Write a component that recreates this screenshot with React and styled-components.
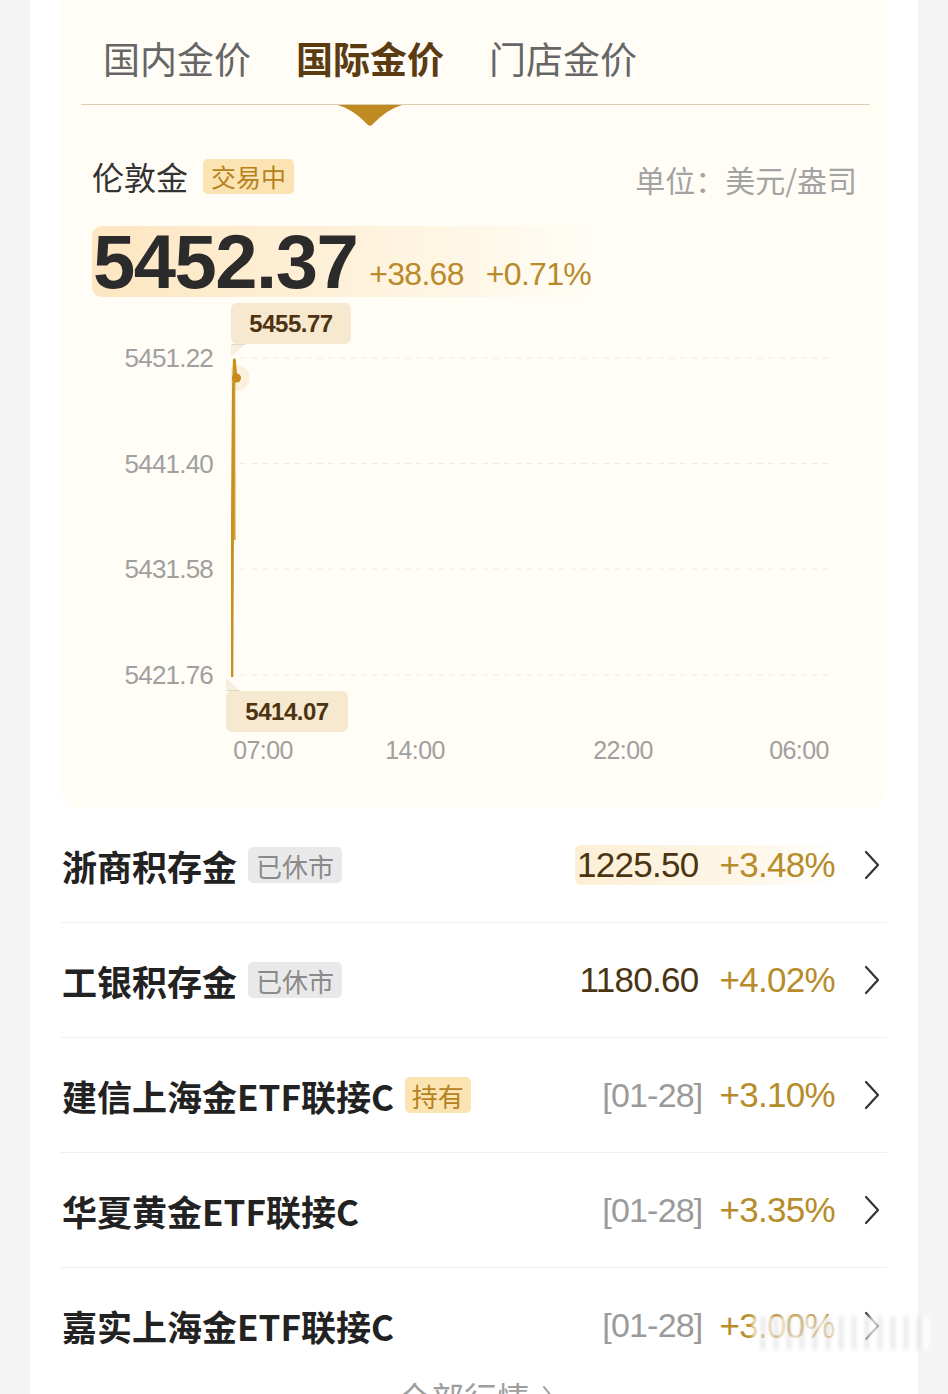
import React from 'react';
import styled, { createGlobalStyle } from 'styled-components';

const CJK = '"Noto Sans CJK SC", "Noto Sans", sans-serif';
const NUM = '"Liberation Sans", Arial, "Noto Sans CJK SC", sans-serif';

const Global = createGlobalStyle`
  html, body { margin: 0; padding: 0; height: 1394px; overflow: hidden; background: #f4f4f4; }
  body { font-family: ${CJK}; }
  * { box-sizing: border-box; }
`;

const Card = styled.div`
  position: relative;
  margin: 0 30px;
  min-height: 1394px;
  background: #fff;
  padding: 0 31px;
`;

const Panel = styled.section`
  background: #fffdf5;
  border-radius: 0 0 18px 18px;
  padding: 0 0 43px;
`;

const TabBar = styled.div`
  display: flex;
  gap: 45px;
  margin: 0 17px 0 20px;
  padding: 36px 0 24px 22px;
  border-bottom: 1px solid #dccfae;
`;

const Tab = styled.div`
  position: relative;
  font-size: 37px;
  line-height: 44px;
  font-weight: ${p => (p.$active ? 700 : 400)};
  color: ${p => (p.$active ? '#5a3b12' : '#666')};
`;

const Pointer = styled.svg`
  position: absolute;
  top: calc(100% + 25px);
  left: 50%;
  transform: translateX(-50%);
`;

const Header = styled.div`
  display: flex;
  align-items: center;
  justify-content: space-between;
  height: 40px;
  margin: 51px 30px 0 31px;
`;

const Title = styled.div`
  display: flex;
  align-items: center;
  gap: 15px;
  font-size: 32px;
  line-height: 40px;
  color: #333;
`;

const Tag = styled.span`
  display: inline-flex;
  align-items: center;
  height: ${p => p.$h || 36}px;
  padding: 0 ${p => p.$px || 7}px;
  border-radius: 5px;
  font-size: ${p => p.$fs || 26}px;
  font-weight: 400;
  background: ${p => (p.$tone === 'gray' ? '#e9e9e9' : '#fce3b2')};
  color: ${p => (p.$tone === 'gray' ? '#8a8a8a' : '#b5821f')};
`;

const Unit = styled.div`
  font-size: 30px;
  color: #a3a3a3;
  margin-top: 6px;
`;

const PriceBox = styled.div`
  display: flex;
  align-items: baseline;
  width: 500px;
  height: 71px;
  margin: 30px 0 0 31px;
  padding-left: 1px;
  border-radius: 10px;
  background: linear-gradient(90deg, #fde6c1 0%, #fef2dc 55%, rgba(255, 253, 245, 0) 100%);
`;

const Price = styled.span`
  font-family: ${NUM};
  font-size: 76px;
  letter-spacing: -1.5px;
  line-height: 71px;
  font-weight: 700;
  color: #2b2b2b;
`;

const Change = styled.span`
  font-family: ${NUM};
  font-size: 32px;
  letter-spacing: -0.7px;
  color: #b88a2a;
  margin-left: ${p => p.$ml}px;
  position: relative;
  top: -3px;
`;

const Chart = styled.div`
  display: flex;
  gap: 18px;
  margin-top: 46px;
`;

const YAxis = styled.div`
  width: 152px;
  height: 347px;
  display: flex;
  flex-direction: column;
  justify-content: space-between;
  align-items: flex-end;
`;

const AxisLabel = styled.span`
  font-family: ${NUM};
  font-size: 26px;
  letter-spacing: -0.8px;
  line-height: 30px;
  color: #a0a0a0;
`;

const Plot = styled.div`
  position: relative;
  width: 599px;
  height: 347px;
`;

const Bubble = styled.div`
  position: absolute;
  left: ${p => p.$left}px;
  top: ${p => p.$top}px;
  width: ${p => p.$w}px;
  height: 41px;
  border-radius: 6px;
  background: #f6e9cf;
  color: #4d3312;
  font-family: ${NUM};
  font-weight: 700;
  font-size: 24px;
  letter-spacing: -0.5px;
  display: flex;
  align-items: center;
  justify-content: center;
`;

const Tail = styled.svg`
  position: absolute;
  left: ${p => p.$left}px;
  top: ${p => p.$top}px;
`;

const XAxis = styled.div`
  display: flex;
  margin-top: 45px;
  padding-left: 170px;
  height: 30px;
`;

const XLabel = styled(AxisLabel)`
  width: 80px;
  text-align: center;
  margin-left: ${p => p.$ml}px;
  font-size: 25px;
  letter-spacing: -0.6px;
`;

const List = styled.div`
  display: flex;
  flex-direction: column;
`;

const Row = styled.div`
  display: flex;
  align-items: center;
  height: 115px;
  padding: 0 7px 0 1px;
  border-bottom: ${p => (p.$last ? 'none' : '1px solid #efefef')};
`;

const Name = styled.div`
  display: flex;
  align-items: center;
  gap: 11px;
  font-size: 35px;
  font-weight: 700;
  color: #222;
`;

const Quote = styled.div`
  margin-left: auto;
  display: flex;
  align-items: center;
  height: 40px;
  padding: 0 2px;
  border-radius: 6px;
  background: ${p =>
    p.$hl ? 'linear-gradient(90deg, #fdefd6 0%, #fef6e8 65%, rgba(255,255,255,0) 100%)' : 'transparent'};
`;

const Value = styled.span`
  font-family: ${NUM};
  font-size: ${p => (p.$date ? 34 : 35)}px;
  letter-spacing: ${p => (p.$date ? -0.8 : -0.7)}px;
  color: ${p => (p.$date ? '#9a9a9a' : '#4a3411')};
`;

const Pct = styled.span`
  font-family: ${NUM};
  font-size: 35px;
  letter-spacing: -0.7px;
  color: #b78c2a;
  margin-left: ${p => p.$ml}px;
`;

const Chevron = styled.svg`
  margin-left: 27px;
  flex: none;
`;

const Footer = styled.div`
  display: flex;
  justify-content: center;
  align-items: center;
  gap: 12px;
  font-size: 33px;
  line-height: 40px;
  color: #9e9e9e;
  margin-top: -6px;
  padding-left: 4px;
`;

const Watermark = styled.div`
  position: absolute;
  right: -12px;
  top: 1316px;
  width: 178px;
  height: 34px;
  filter: blur(2px);
  background: repeating-linear-gradient(
    90deg,
    rgba(255, 255, 255, 0.9) 0px,
    rgba(255, 255, 255, 0.9) 9px,
    rgba(120, 120, 120, 0.45) 11px,
    rgba(255, 255, 255, 0.9) 13px
  );
  opacity: 0.8;
`;

const tabs = [
  { label: '国内金价' },
  { label: '国际金价', active: true },
  { label: '门店金价' },
];

const yLabels = ['5451.22', '5441.40', '5431.58', '5421.76'];
const xCenters = [
  { t: '07:00', c: 32 },
  { t: '14:00', c: 184 },
  { t: '22:00', c: 392 },
  { t: '06:00', c: 568 },
];

const rows = [
  { name: '浙商积存金', tag: { text: '已休市', tone: 'gray' }, value: '1225.50', pct: '+3.48%', hl: true },
  { name: '工银积存金', tag: { text: '已休市', tone: 'gray' }, value: '1180.60', pct: '+4.02%' },
  { name: '建信上海金ETF联接C', tag: { text: '持有', tone: 'gold' }, value: '[01-28]', date: true, pct: '+3.10%' },
  { name: '华夏黄金ETF联接C', value: '[01-28]', date: true, pct: '+3.35%' },
  { name: '嘉实上海金ETF联接C', value: '[01-28]', date: true, pct: '+3.00%' },
];

function PriceChart() {
  const grid = [15, 120.5, 226, 332];
  return (
    <Plot>
      <svg width="599" height="347" viewBox="0 0 599 347" style={{ position: 'absolute', left: 0, top: 0 }}>
        {grid.map(y => (
          <line key={y} x1="9" x2="599" y1={y} y2={y} stroke="#ececec" strokeWidth="1" strokeDasharray="6 5" />
        ))}
        <circle cx="5.5" cy="35" r="13" fill="rgba(205,160,70,0.13)" />
        <path d="M0.8 334 L1.6 160 L2.4 50 L3.4 17 L4.2 28 L5 34" fill="none" stroke="#c8911f" strokeWidth="3" strokeLinejoin="round" />
        <path d="M3.6 34 L3.8 197" fill="none" stroke="#d29a2a" strokeWidth="1.4" />
        <circle cx="5.5" cy="35" r="4.5" fill="#c8891a" />
      </svg>
      <Bubble $left={0} $top={-40} $w={120}>5455.77</Bubble>
      <Tail $left={0} $top={1} width="14" height="13" viewBox="0 0 14 13">
        <path d="M0 0 H14 L0 13 Z" fill="#f6efdf" />
        <line x1="0" x2="14" y1="0.5" y2="0.5" stroke="#e2d8c4" strokeWidth="1" />
      </Tail>
      <Bubble $left={-5} $top={348} $w={122}>5414.07</Bubble>
      <Tail $left={-5} $top={335} width="14" height="13" viewBox="0 0 14 13">
        <path d="M0 0 L14 13 H0 Z" fill="#f6efdf" />
        <line x1="0" x2="14" y1="12.5" y2="12.5" stroke="#e2d8c4" strokeWidth="1" />
      </Tail>
    </Plot>
  );
}

export default function App() {
  let prev = 0;
  const xs = xCenters.map(({ t, c }) => {
    const ml = c - 40 - prev;
    prev = c + 40;
    return { t, ml };
  });

  return (
    <>
      <Global />
      <Card>
        <Panel>
          <TabBar>
            {tabs.map(t => (
              <Tab key={t.label} $active={t.active}>
                {t.label}
                {t.active && (
                  <Pointer width="64" height="22" viewBox="0 0 64 22">
                    <path d="M0 0 H64 Q48 5 35.5 18.5 Q32 23 28.5 18.5 Q16 5 0 0 Z" fill="#c08a22" />
                  </Pointer>
                )}
              </Tab>
            ))}
          </TabBar>

          <Header>
            <Title>
              伦敦金
              <Tag $tone="gold" $h={35} $px={8} $fs={25}>交易中</Tag>
            </Title>
            <Unit>单位：美元/盎司</Unit>
          </Header>

          <PriceBox>
            <Price>5452.37</Price>
            <Change $ml={12}>+38.68</Change>
            <Change $ml={22}>+0.71%</Change>
          </PriceBox>

          <Chart>
            <YAxis>
              {yLabels.map(l => (
                <AxisLabel key={l}>{l}</AxisLabel>
              ))}
            </YAxis>
            <PriceChart />
          </Chart>

          <XAxis>
            {xs.map(x => (
              <XLabel key={x.t} $ml={x.ml}>{x.t}</XLabel>
            ))}
          </XAxis>
        </Panel>

        <List>
          {rows.map((r, i) => (
            <Row key={r.name} $last={i === rows.length - 1}>
              <Name>
                {r.name}
                {r.tag && (
                  <Tag $tone={r.tag.tone} $px={r.tag.tone === 'gray' ? 8 : 7}>
                    {r.tag.text}
                  </Tag>
                )}
              </Name>
              <Quote $hl={r.hl}>
                <Value $date={r.date}>{r.value}</Value>
                <Pct $ml={r.date ? 17 : 21}>{r.pct}</Pct>
              </Quote>
              <Chevron width="16" height="30" viewBox="0 0 16 30">
                <path d="M2 2 L14 15 L2 28" fill="none" stroke="#333" strokeWidth="2.2" strokeLinecap="round" strokeLinejoin="round" />
              </Chevron>
            </Row>
          ))}
        </List>
        <Footer>
          全部行情
          <svg width="12" height="24" viewBox="0 0 12 24">
            <path d="M2 2 L10 12 L2 22" fill="none" stroke="#9e9e9e" strokeWidth="2" strokeLinecap="round" strokeLinejoin="round" />
          </svg>
        </Footer>
        <Watermark />
      </Card>
    </>
  );
}
